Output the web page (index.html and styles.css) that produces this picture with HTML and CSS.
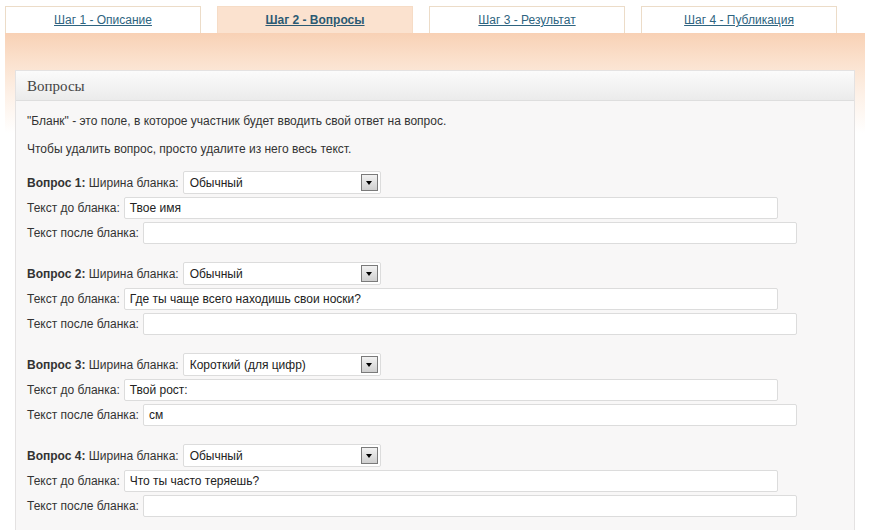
FILE: index.html
```html
<!DOCTYPE html>
<html lang="ru">
<head>
<meta charset="utf-8">
<title>Вопросы</title>
<link rel="stylesheet" href="styles.css">
</head>
<body>
<div class="page">
  <nav class="tabs">
    <a class="tab" href="#">Шаг 1 - Описание</a>
    <a class="tab active" href="#">Шаг 2 - Вопросы</a>
    <a class="tab" href="#">Шаг 3 - Результат</a>
    <a class="tab" href="#">Шаг 4 - Публикация</a>
  </nav>
  <div class="band">
    <section class="panel">
      <h2 class="panel-head">Вопросы</h2>
      <div class="panel-body">
        <p class="note">"Бланк" - это поле, в которое участник будет вводить свой ответ на вопрос.</p>
        <p class="note second">Чтобы удалить вопрос, просто удалите из него весь текст.</p>

        <div class="question">
          <div class="row"><span class="lbl"><b>Вопрос 1:</b> Ширина бланка:</span>
            <div class="select"><span>Обычный</span><i class="arrow"></i></div></div>
          <div class="row"><span class="lbl">Текст до бланка:</span><div class="input">Твое имя</div></div>
          <div class="row"><span class="lbl">Текст после бланка:</span><div class="input"></div></div>
        </div>

        <div class="question">
          <div class="row"><span class="lbl"><b>Вопрос 2:</b> Ширина бланка:</span>
            <div class="select"><span>Обычный</span><i class="arrow"></i></div></div>
          <div class="row"><span class="lbl">Текст до бланка:</span><div class="input">Где ты чаще всего находишь свои носки?</div></div>
          <div class="row"><span class="lbl">Текст после бланка:</span><div class="input"></div></div>
        </div>

        <div class="question">
          <div class="row"><span class="lbl"><b>Вопрос 3:</b> Ширина бланка:</span>
            <div class="select"><span>Короткий (для цифр)</span><i class="arrow"></i></div></div>
          <div class="row"><span class="lbl">Текст до бланка:</span><div class="input">Твой рост:</div></div>
          <div class="row"><span class="lbl">Текст после бланка:</span><div class="input">см</div></div>
        </div>

        <div class="question">
          <div class="row"><span class="lbl"><b>Вопрос 4:</b> Ширина бланка:</span>
            <div class="select"><span>Обычный</span><i class="arrow"></i></div></div>
          <div class="row"><span class="lbl">Текст до бланка:</span><div class="input">Что ты часто теряешь?</div></div>
          <div class="row"><span class="lbl">Текст после бланка:</span><div class="input"></div></div>
        </div>
      </div>
    </section>
  </div>
</div>
</body>
</html>
```

FILE: styles.css
```css
html, body {
  margin: 0;
  padding: 0;
  background: #fff;
}
body {
  font-family: "Liberation Sans", Arial, sans-serif;
  font-size: 12px;
  color: #333;
  overflow: hidden;
}
.page {
  padding: 6px 8px 0 5px;
  width: 860px;
}
.tabs {
  display: flex;
  gap: 16px;
  height: 27px;
}
.tab {
  box-sizing: border-box;
  width: 196px;
  height: 27px;
  border: 1px solid #ecdcc8;
  border-bottom: none;
  background: #fff;
  color: #2e6480;
  text-align: center;
  line-height: 26px;
  font-size: 12px;
}
.tab.active {
  background: #fbe2cf;
  border-color: #f6dcc6;
  font-weight: bold;
  color: #2b5a73;
}
.band {
  padding: 37px 10px 0 10px;
  background: linear-gradient(to bottom, #f8d1b5 0px, #fbe2cf 30px, #fdf0e6 60px, #ffffff 100px);
}
.panel {
  border: 1px solid #e4e2e2;
  border-bottom: none;
  background: #f8f7f7;
  height: 470px;
}
.panel-head {
  margin: 0;
  height: 29px;
  border-bottom: 1px solid #dedede;
  background: linear-gradient(to bottom, #fbfbfb, #ebebeb);
  font-family: "Liberation Serif", "DejaVu Serif", serif;
  font-weight: normal;
  font-size: 15px;
  color: #444;
  line-height: 30px;
  padding-left: 11px;
}
.panel-body {
  padding: 12px 11px 0 11px;
}
.note {
  margin: 0;
  line-height: 16px;
}
.note.second {
  margin-top: 12px;
  margin-bottom: 13px;
}
.question {
  margin-bottom: 16px;
}
.row {
  display: flex;
  align-items: center;
  height: 25px;
  gap: 4px;
}
.select {
  box-sizing: border-box;
  width: 198px;
  height: 23px;
  border: 1px solid #dcdcdc;
  border-radius: 2px;
  background: #fff;
  display: flex;
  align-items: center;
  justify-content: space-between;
  padding: 0 2px 0 6px;
  color: #222;
}
.arrow {
  box-sizing: border-box;
  width: 17px;
  height: 17px;
  border: 1px solid #7a7a7a;
  background: linear-gradient(to bottom, #f2f2f2, #cfcfcf);
  position: relative;
}
.arrow::after {
  content: "";
  position: absolute;
  left: 4px;
  top: 6px;
  border-left: 3.5px solid transparent;
  border-right: 3.5px solid transparent;
  border-top: 4px solid #000;
}
.input {
  box-sizing: border-box;
  width: 654px;
  height: 22px;
  border: 1px solid #dcdcdc;
  border-radius: 2px;
  background: #fff;
  padding-left: 5px;
  line-height: 20px;
  color: #222;
}
```
